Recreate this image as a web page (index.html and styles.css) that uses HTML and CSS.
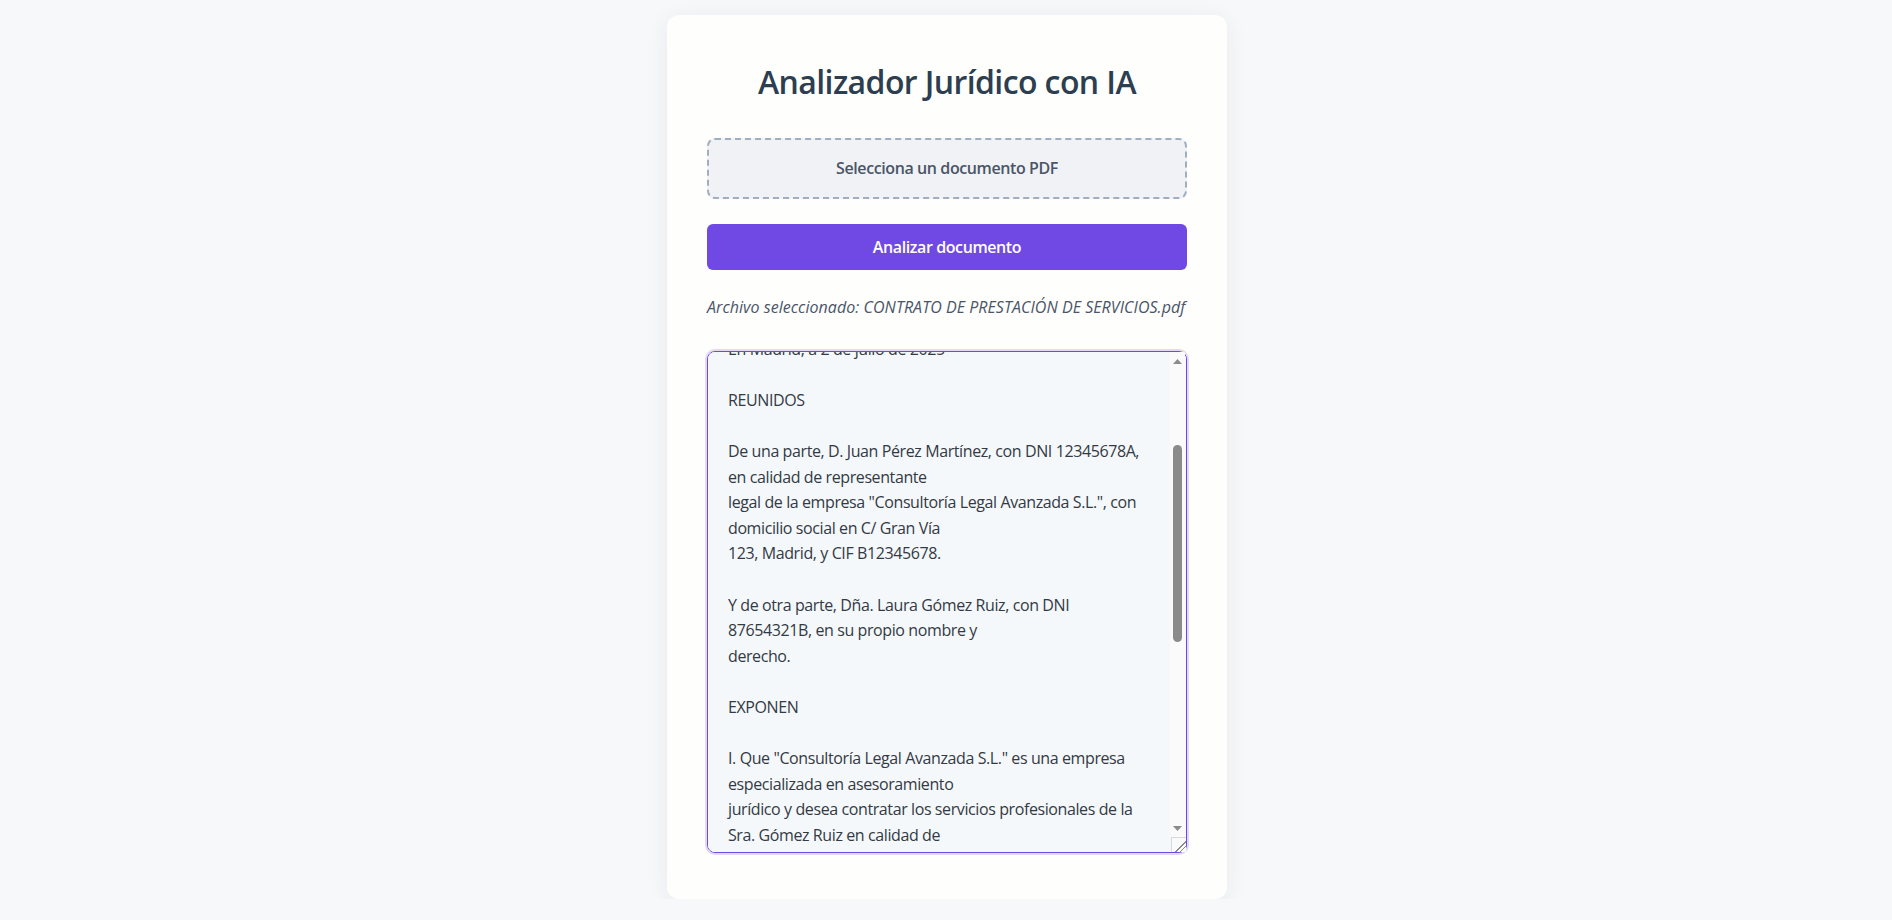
FILE: index.html
```html
<!DOCTYPE html>
<html lang="es">
<head>
<meta charset="utf-8">
<title>Analizador Jurídico con IA</title>
<link rel="stylesheet" href="styles.css">
</head>
<body>
<main class="card">
  <h1 class="title">Analizador Jurídico con IA</h1>
  <label class="file-drop">Selecciona un documento PDF<input class="file-input" type="file" accept="application/pdf"></label>
  <button class="analyze-btn" type="button">Analizar documento</button>
  <p class="file-name">Archivo seleccionado: CONTRATO DE PRESTACIÓN DE SERVICIOS.pdf</p>
  <div class="doc-wrap">
    <textarea class="doc-text" readonly wrap="off">
CONTRATO DE PRESTACIÓN DE SERVICIOS
PROFESIONALES DE ASESORAMIENTO JURÍDICO

Documento n.º 2025/0147


En Madrid, a 2 de julio de 2025

REUNIDOS

De una parte, D. Juan Pérez Martínez, con DNI 12345678A,
en calidad de representante
legal de la empresa "Consultoría Legal Avanzada S.L.", con
domicilio social en C/ Gran Vía
123, Madrid, y CIF B12345678.

Y de otra parte, Dña. Laura Gómez Ruiz, con DNI
87654321B, en su propio nombre y
derecho.

EXPONEN

I. Que "Consultoría Legal Avanzada S.L." es una empresa
especializada en asesoramiento
jurídico y desea contratar los servicios profesionales de la
Sra. Gómez Ruiz en calidad de
asesora jurídica externa.

II. Que la Sra. Gómez Ruiz es licenciada en Derecho,
colegiada en el Ilustre Colegio de
Abogados de Madrid con el número 54321, y cuenta con la
experiencia necesaria.

Ambas partes se reconocen mutuamente la capacidad legal
necesaria para contratar y obligarse
y, a tal efecto, suscriben el presente contrato con arreglo a
las siguientes

CLÁUSULAS

PRIMERA. OBJETO DEL CONTRATO

El objeto del presente contrato es la prestación de servicios
de asesoramiento jurídico en
materia mercantil, laboral y fiscal.</textarea>
    <div class="scrollbar" aria-hidden="true">
      <div class="sb-button sb-up">
        <svg class="sb-arrow" width="9" height="5" viewBox="0 0 9 5"><polygon points="0,5 4.5,0 9,5"/></svg>
      </div>
      <div class="sb-track">
        <div class="sb-thumb"></div>
      </div>
      <div class="sb-button sb-down">
        <svg class="sb-arrow" width="9" height="5" viewBox="0 0 9 5"><polygon points="0,0 9,0 4.5,5"/></svg>
      </div>
    </div>
  </div>
</main>
<script src="script.js"></script>
</body>
</html>
```

FILE: styles.css
```css
html, body {
  margin: 0;
  padding: 0;
}

body {
  background: #f7f8fa;
  font-family: "Open Sans", "Noto Sans", "Liberation Sans", sans-serif;
  color: #2d3748;
  padding: 15px 0 0 2px;
}

.card {
  box-sizing: border-box;
  width: 560px;
  margin: 0 auto;
  padding: 40px 40px 46px;
  background: #fefefc;
  border-radius: 12px;
  box-shadow: 0 4px 22px rgba(30, 40, 60, 0.07);
}

.title {
  margin: 7px 0 36px;
  font-size: 32px;
  line-height: 40px;
  font-weight: 600;
  letter-spacing: -0.6px;
  color: #2c3e50;
  text-align: center;
}

.file-drop {
  display: block;
  box-sizing: border-box;
  height: 61px;
  padding: 16px;
  border: 2px dashed #a0aec0;
  border-radius: 8px;
  background: #f0f2f5;
  font-size: 16px;
  line-height: 25px;
  font-weight: 600;
  letter-spacing: -0.4px;
  color: #4a5568;
  text-align: center;
  cursor: pointer;
}

.file-input {
  display: none;
}

.analyze-btn {
  display: block;
  box-sizing: border-box;
  width: 100%;
  height: 46px;
  margin: 25px 0 0;
  padding: 12px;
  border: none;
  border-radius: 6px;
  background: #7048e3;
  color: #ffffff;
  font-family: inherit;
  font-size: 16px;
  line-height: 22px;
  font-weight: 600;
  letter-spacing: -0.4px;
  cursor: pointer;
}

.file-name {
  margin: 25px 0 0;
  font-size: 16px;
  line-height: 24px;
  font-style: italic;
  letter-spacing: 0.05px;
  color: #4a5568;
  white-space: nowrap;
}

.doc-wrap {
  position: relative;
  margin: 32px 0 0;
}

.doc-text {
  display: block;
  box-sizing: border-box;
  width: 100%;
  height: 502px;
  margin: 0;
  padding: 19px 0 19px 20px;
  border: 1px solid #7048e3;
  border-radius: 8px;
  box-shadow: 0 0 0 2px rgba(112, 72, 227, 0.2);
  background: #f5f8fb;
  color: #333a44;
  font-family: inherit;
  font-size: 16px;
  line-height: 1.6;
  letter-spacing: -0.4px;
  white-space: pre;
  overflow-x: hidden;
  overflow-y: scroll;
  scrollbar-width: none;
  resize: vertical;
  outline: none;
}

.doc-text::-webkit-resizer {
  background-color: #fafafa;
  background-repeat: no-repeat;
  background-image:
    linear-gradient(#d9d9d9, #d9d9d9),
    linear-gradient(#d9d9d9, #d9d9d9),
    linear-gradient(135deg, transparent 0 62%, #8b8b8b 62% 67%, transparent 67% 78%, #8b8b8b 78% 83%, transparent 83%);
  background-size: 100% 1px, 1px 100%, 100% 100%;
  background-position: 0 0, 0 0, 0 0;
}

/* visual scrollbar drawn over the right edge of the textarea */
.scrollbar {
  position: absolute;
  top: 1px;
  right: 2px;
  width: 15px;
  height: 485px;
  display: flex;
  flex-direction: column;
  background: #fafafa;
  pointer-events: none;
}

.sb-button {
  flex: 0 0 17px;
  display: flex;
  justify-content: center;
  align-items: center;
}

.sb-up {
  padding-top: 2px;
  box-sizing: border-box;
}

.sb-arrow {
  display: block;
  fill: #8b8b8b;
}

.sb-track {
  flex: 1;
  display: flex;
  flex-direction: column;
  align-items: center;
}

.sb-thumb {
  width: 9px;
  height: 197px;
  margin-top: 76px;
  border-radius: 5px;
  background: #8b8b8b;
}
```

FILE: script.js
```js
document.querySelector('.doc-text').scrollTop = 188;
```
